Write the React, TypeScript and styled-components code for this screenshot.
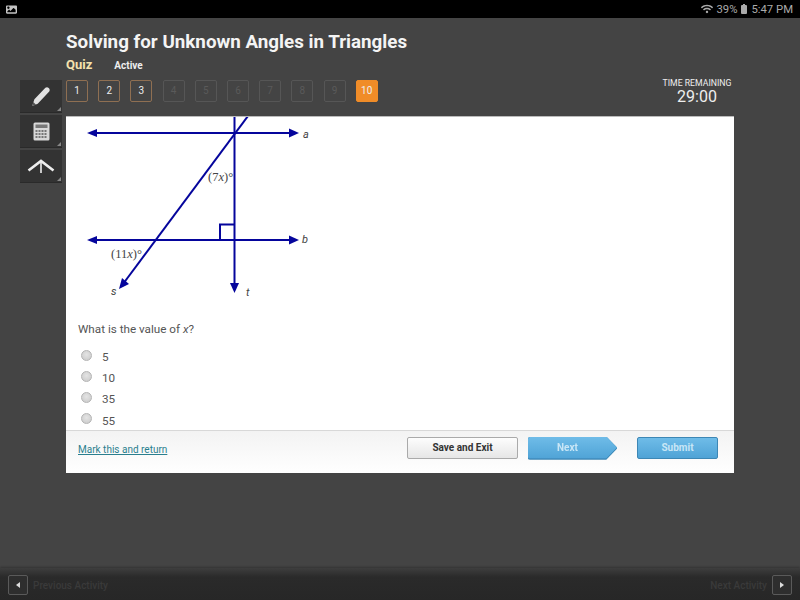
import React from 'react';
import styled, { createGlobalStyle } from 'styled-components';
import { FaImage, FaWifi } from 'react-icons/fa';

const GlobalStyle = createGlobalStyle`
  html, body {
    margin: 0;
    padding: 0;
    background: #444;
    font-family: Roboto, "Liberation Sans", sans-serif;
  }
`;

const Page = styled.div`
  display: flex;
  flex-direction: column;
  height: 600px;
  overflow: hidden;
  width: 800px;
`;

const StatusBar = styled.div`
  align-items: center;
  background: #000;
  color: #aaa;
  display: flex;
  flex: 0 0 18px;
  font-size: 11.3px;
  justify-content: space-between;
  padding: 0 7px 0 6px;
`;

const StatusRight = styled.div`
  align-items: center;
  display: flex;
  gap: 3px;
`;

const Battery = styled.span`
  background: #aaa;
  border-radius: 1px;
  display: inline-block;
  height: 9px;
  margin: 0 1px 0 1px;
  position: relative;
  width: 6px;

  &::before {
    background: #aaa;
    content: '';
    height: 1px;
    left: 2px;
    position: absolute;
    top: -1px;
    width: 2px;
  }
`;

const Main = styled.div`
  background: #444;
  display: grid;
  flex: 1;
  grid-template-columns: 66px 668px;
  grid-template-rows: 62px auto;
`;

const Header = styled.div`
  display: flex;
  flex-direction: column;
  grid-column: 2 / 4;
  padding-top: 13px;
`;

const Title = styled.h1`
  color: #f4f4f4;
  font-size: 18.8px;
  font-weight: 700;
  line-height: 22px;
  margin: 0;
  white-space: nowrap;
`;

const SubRow = styled.div`
  align-items: baseline;
  display: flex;
  gap: 22px;
  margin-top: 4px;
`;

const QuizLabel = styled.span`
  color: #f5e2ae;
  font-size: 13px;
  font-weight: 700;
`;

const ActiveLabel = styled.span`
  color: #eee;
  font-size: 10px;
  font-weight: 700;
`;

const Tools = styled.div`
  display: flex;
  flex-direction: column;
  gap: 2px;
  margin-left: 20px;
  width: 42px;
`;

const ToolButton = styled.div`
  align-items: center;
  background: #333;
  border-bottom: 1px solid #2a2a2a;
  box-sizing: border-box;
  display: flex;
  height: 33px;
  justify-content: center;
  position: relative;

  &::after {
    border-bottom: 4px solid #888;
    border-left: 4px solid transparent;
    bottom: 1px;
    content: '';
    position: absolute;
    right: 1px;
  }
`;

const Column = styled.div`
  display: flex;
  flex-direction: column;
  gap: 14px;
  position: relative;
`;

const Numbers = styled.div`
  display: flex;
  gap: 10.2px;
  height: 22px;
`;

const NumberBox = styled.div<{ $state: 'seen' | 'locked' | 'current' }>`
  align-items: center;
  background: ${(p) => (p.$state === 'current' ? '#f08c28' : 'transparent')};
  border: 1px solid
    ${(p) => (p.$state === 'seen' ? '#8f6f52' : p.$state === 'locked' ? '#565656' : '#f08c28')};
  border-radius: 2px;
  box-sizing: border-box;
  color: ${(p) => (p.$state === 'locked' ? '#5a5a5a' : '#eee')};
  display: flex;
  font-size: 10px;
  height: 22px;
  justify-content: center;
  padding-bottom: 2px;
  width: 22px;
`;

const Timer = styled.div`
  color: #eee;
  position: absolute;
  right: 1px;
  text-align: center;
  top: -2px;
  width: 72px;
`;

const TimerLabel = styled.div`
  font-size: 8.7px;
  line-height: 11px;
  white-space: nowrap;
`;

const TimerValue = styled.div`
  font-size: 16px;
  line-height: 16px;
`;

const Card = styled.div`
  background: #fff;
  border-top: 1px solid #bbb;
  box-sizing: border-box;
  display: flex;
  flex-direction: column;
  height: 357px;
  overflow: hidden;
`;

const Question = styled.div`
  display: flex;
  flex: 1;
  flex-direction: column;
  min-height: 0;
  overflow: hidden;
`;

const Diagram = styled.svg`
  display: block;
  flex: 0 0 190px;
`;

const Prompt = styled.p`
  color: #555;
  font-size: 11.7px;
  line-height: 14px;
  margin: 15px 0 13px 12px;
`;

const Options = styled.div`
  display: flex;
  flex-direction: column;
  gap: 5.2px;
  padding-left: 15px;
`;

const Option = styled.label`
  align-items: center;
  color: #555;
  display: flex;
  font-size: 11.7px;
  gap: 10px;
  height: 16px;
`;

const Radio = styled.span`
  background: radial-gradient(circle at 50% 40%, #e4e4e4, #c8c8c8);
  border: 1px solid #b4b4b4;
  border-radius: 50%;
  box-sizing: border-box;
  height: 11px;
  margin-top: -4px;
  width: 11px;
`;

const Footer = styled.div`
  align-items: center;
  background: linear-gradient(#f3f3f3, #fff);
  border-top: 1px solid #d8d8d8;
  box-sizing: border-box;
  display: flex;
  flex: 0 0 43px;
  padding: 0 16px 9px 12px;
`;

const MarkLink = styled.a`
  color: #2a7f8e;
  flex: 1;
  font-size: 10px;
  margin-top: 4px;
  text-decoration: underline;
`;

const Button = styled.button<{ $primary?: boolean }>`
  background: ${(p) =>
    p.$primary ? 'linear-gradient(#6fbce8, #4fa3d6)' : 'linear-gradient(#fdfdfd, #e6e6e6)'};
  border: 1px solid ${(p) => (p.$primary ? '#3d87b5' : '#aaa')};
  border-radius: 2px;
  color: ${(p) => (p.$primary ? '#c8e6f6' : '#333')};
  font-family: inherit;
  font-size: 10px;
  font-weight: 700;
  height: 22px;
  padding: 0;
`;

const SaveButton = styled(Button)`
  margin-right: 10px;
  width: 111px;
`;

const NextWrap = styled.div`
  filter: drop-shadow(0 0 0.5px #2f7aa8) drop-shadow(0 1px 0 #3d87b5);
  margin-right: 20px;
`;

const NextButton = styled(Button)`
  border: none;
  clip-path: polygon(0 0, 88% 0, 100% 50%, 88% 100%, 0 100%);
  display: block;
  padding-right: 10px;
  width: 89px;
`;

const SubmitButton = styled(Button)`
  width: 81px;
`;

const BottomBar = styled.div`
  align-items: center;
  background: linear-gradient(#3e3e3e 0, #2a2a2a 9px, #272727 100%);
  box-shadow: 0 -1px 2px rgba(0, 0, 0, 0.25);
  box-sizing: border-box;
  display: flex;
  flex: 0 0 32px;
  justify-content: space-between;
  padding: 2px 8px 0;
`;

const NavGroup = styled.div`
  align-items: center;
  display: flex;
  gap: 5px;
`;

const NavText = styled.span`
  color: #3a3a3a;
  font-size: 10px;
  font-weight: 500;
`;

const NavButton = styled.div`
  align-items: center;
  background: #2e2e2e;
  border: 1px solid #5a5a5a;
  border-radius: 2px;
  box-sizing: border-box;
  display: flex;
  height: 20px;
  justify-content: center;
  width: 20px;
`;

const Arrow = styled.span<{ $dir: 'left' | 'right' }>`
  border-bottom: 3.5px solid transparent;
  border-top: 3.5px solid transparent;
  ${(p) => (p.$dir === 'left' ? 'border-right: 4px solid #ddd;' : 'border-left: 4px solid #ddd;')}
`;

const DIAGRAM_BLUE = '#05059c';

// coordinates are relative to the card: page x - 66, page y - 117
const Figure = () => (
  <Diagram width="300" height="190" viewBox="0 0 300 190">
    <g stroke={DIAGRAM_BLUE} strokeWidth="2" fill="none">
      <path d="M26 16H228" />
      <path d="M26 123H228" />
      <path d="M168.500 0V168" />
      <path d="M182 -1L57 167" />
      <path d="M154 123V107.500H168" />
    </g>
    <g fill={DIAGRAM_BLUE}>
      <path d="M21 16L31 12V20Z" />
      <path d="M233 16L223 11.500V20.500Z" />
      <path d="M21 123L31 119V127Z" />
      <path d="M233 123L223 118.500V127.500Z" />
      <path d="M168.500 176L164 166H173Z" />
      <path d="M53 172L56 161L63 167Z" />
    </g>
    <g fill="#444">
      <text x="237" y="21" fontSize="11" fontFamily="Roboto, sans-serif" fontStyle="italic">a</text>
      <text x="236" y="126" fontSize="11" fontFamily="Roboto, sans-serif" fontStyle="italic">b</text>
      <text x="45" y="178" fontSize="11" fontFamily="Roboto, sans-serif" fontStyle="italic">s</text>
      <text x="180" y="179" fontSize="11" fontFamily="Roboto, sans-serif" fontStyle="italic">t</text>
      <text x="142" y="64" fontSize="12.500" fontFamily="'Liberation Serif', serif">(7<tspan fontStyle="italic">x</tspan>)°</text>
      <text x="45" y="141" fontSize="12.500" fontFamily="'Liberation Serif', serif">(11<tspan fontStyle="italic">x</tspan>)°</text>
    </g>
  </Diagram>
);

const PencilIcon = () => (
  <svg width="22" height="22" viewBox="1 -1 20 20">
    <path d="M5 12L15 1.500C16 .8 17 .8 18 1.700C19 2.600 19.200 3.800 18.500 4.800L8 16L3 18Z" fill="#e2e2e2" />
    <path d="M3 18L4 14.500L6.500 17Z" fill="#555" />
  </svg>
);

const CalculatorIcon = () => (
  <svg width="17" height="19" viewBox="0 0 17 19">
    <rect x="0.500" y="0.500" width="16" height="18" rx="1.500" fill="#d8d8d8" />
    <rect x="2.500" y="2.500" width="12" height="3.500" fill="#777" />
    <g fill="#777">
      {[8, 11, 14].flatMap((y) =>
        [2.5, 5.5, 8.5, 11.5].map((x) => <rect key={`${x}-${y}`} x={x} y={y} width="2" height="2" />),
      )}
    </g>
  </svg>
);

const ReferenceIcon = () => (
  <svg width="28" height="16" viewBox="0 0 28 16">
    <path d="M1.500 12.500L14 3L26.500 12.500" stroke="#eee" strokeWidth="2.600" fill="none" />
    <path d="M14 3V15" stroke="#eee" strokeWidth="1.600" />
  </svg>
);

const numbers = [1, 2, 3, 4, 5, 6, 7, 8, 9, 10];

export default function App() {
  return (
    <Page>
      <GlobalStyle />
      <StatusBar>
        <FaImage size={11} color="#c4c4c4" />
        <StatusRight>
          <FaWifi size={12} />
          <span>39%</span>
          <Battery />
          <span>5:47 PM</span>
        </StatusRight>
      </StatusBar>
      <Main>
        <div />
        <Header>
          <Title>Solving for Unknown Angles in Triangles</Title>
          <SubRow>
            <QuizLabel>Quiz</QuizLabel>
            <ActiveLabel>Active</ActiveLabel>
          </SubRow>
        </Header>
        <Tools>
          <ToolButton><PencilIcon /></ToolButton>
          <ToolButton><CalculatorIcon /></ToolButton>
          <ToolButton><ReferenceIcon /></ToolButton>
        </Tools>
        <Column>
          <Numbers>
            {numbers.map((n) => (
              <NumberBox key={n} $state={n <= 3 ? 'seen' : n === 10 ? 'current' : 'locked'}>
                {n}
              </NumberBox>
            ))}
          </Numbers>
          <Timer>
            <TimerLabel>TIME REMAINING</TimerLabel>
            <TimerValue>29:00</TimerValue>
          </Timer>
          <Card>
            <Question>
              <Figure />
              <Prompt>What is the value of <i>x</i>?</Prompt>
              <Options>
                {['5', '10', '35', '55'].map((v) => (
                  <Option key={v}>
                    <Radio />
                    {v}
                  </Option>
                ))}
              </Options>
            </Question>
            <Footer>
              <MarkLink>Mark this and return</MarkLink>
              <SaveButton>Save and Exit</SaveButton>
              <NextWrap><NextButton $primary>Next</NextButton></NextWrap>
              <SubmitButton $primary>Submit</SubmitButton>
            </Footer>
          </Card>
        </Column>
      </Main>
      <BottomBar>
        <NavGroup>
          <NavButton><Arrow $dir="left" /></NavButton>
          <NavText>Previous Activity</NavText>
        </NavGroup>
        <NavGroup>
          <NavText>Next Activity</NavText>
          <NavButton><Arrow $dir="right" /></NavButton>
        </NavGroup>
      </BottomBar>
    </Page>
  );
}
